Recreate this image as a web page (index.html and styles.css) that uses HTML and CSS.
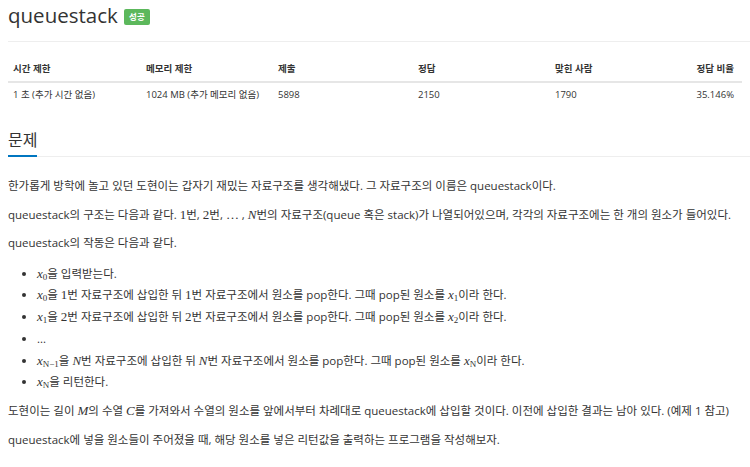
FILE: index.html
```html
<!DOCTYPE html>
<html lang="ko">
<head>
  <meta charset="UTF-8" />
  <meta name="viewport" content="width=device-width, initial-scale=1.0"/>
  <title>queuestack</title>
  <link rel="stylesheet" href="styles.css">
</head>
<body>

<div class="page">
  <!-- Title -->
  <div class="page-header">
    <h1><span class="title">queuestack</span> <span class="label">성공</span></h1>
  </div>

  <!-- Limits table -->
  <table class="info">
    <thead>
      <tr>
        <th class="c1">시간 제한</th>
        <th class="c2">메모리 제한</th>
        <th class="c3">제출</th>
        <th class="c4">정답</th>
        <th class="c5">맞힌 사람</th>
        <th class="c6">정답 비율</th>
      </tr>
    </thead>
    <tbody>
      <tr>
        <td>1 초 (추가 시간 없음)</td>
        <td>1024 MB (추가 메모리 없음)</td>
        <td>5898</td>
        <td>2150</td>
        <td>1790</td>
        <td class="c6">35.146%</td>
      </tr>
    </tbody>
  </table>

  <!-- Problem -->
  <div class="section">
    <div class="headline">
      <h2>문제</h2>
    </div>
    <div class="problem-text">
      <p>한가롭게 방학에 놀고 있던 도현이는 갑자기 재밌는 자료구조를 생각해냈다. 그 자료구조의 이름은 queuestack이다.</p>
      <p>queuestack의 구조는 다음과 같다. <span class="num">1</span>번, <span class="num">2</span>번, <span class="num">…</span> , <span class="math">N</span>번의 자료구조(queue 혹은 stack)가 나열되어있으며, 각각의 자료구조에는 한 개의 원소가 들어있다.</p>
      <p>queuestack의 작동은 다음과 같다.</p>
      <ul>
        <li><span class="math">x<sub>0</sub></span>을 입력받는다.</li>
        <li><span class="math">x<sub>0</sub></span>을 <span class="num">1</span>번 자료구조에 삽입한 뒤 <span class="num">1</span>번 자료구조에서 원소를 pop한다. 그때 pop된 원소를 <span class="math">x<sub>1</sub></span>이라 한다.</li>
        <li><span class="math">x<sub>1</sub></span>을 <span class="num">2</span>번 자료구조에 삽입한 뒤 <span class="num">2</span>번 자료구조에서 원소를 pop한다. 그때 pop된 원소를 <span class="math">x<sub>2</sub></span>이라 한다.</li>
        <li>...</li>
        <li><span class="math">x<sub>N<span class="up">−1</span></sub></span>을 <span class="math">N</span>번 자료구조에 삽입한 뒤 <span class="math">N</span>번 자료구조에서 원소를 pop한다. 그때 pop된 원소를 <span class="math">x<sub>N</sub></span>이라 한다.</li>
        <li><span class="math">x<sub>N</sub></span>을 리턴한다.</li>
      </ul>
      <p>도현이는 길이 <span class="math">M</span>의 수열 <span class="math">C</span>를 가져와서 수열의 원소를 앞에서부터 차례대로 queuestack에 삽입할 것이다. 이전에 삽입한 결과는 남아 있다. (예제 1 참고)</p>
      <p>queuestack에 넣을 원소들이 주어졌을 때, 해당 원소를 넣은 리턴값을 출력하는 프로그램을 작성해보자.</p>
    </div>
  </div>
</div>

</body>
</html>
```

FILE: styles.css
```css
* {
  margin: 0;
  padding: 0;
  box-sizing: border-box;
}

body {
  font-family: "Open Sans", "Noto Sans CJK KR", sans-serif;
  font-size: 11.5px;
  color: #333;
  background: #fff;
}

.page {
  padding-left: 8px;
}

/* title */
.page-header {
  padding-bottom: 11px;
  border-bottom: 1px solid #eee;
}

.page-header h1 {
  font-size: 20.5px;
  font-weight: 400;
  line-height: 30px;
}

.label {
  display: inline-block;
  vertical-align: 3px;
  margin-left: 1px;
  padding: 0 5px;
  height: 16px;
  line-height: 16px;
  font-size: 8.5px;
  font-weight: bold;
  color: #fff;
  background-color: #5cb85c;
  border-radius: 2px;
}

/* limits table */
.info {
  width: 734px;
  margin-top: 11px;
  border-collapse: collapse;
  table-layout: fixed;
  font-size: 9.5px;
}

.info th,
.info td {
  text-align: left;
  line-height: 15px;
  padding: 8px 5px 5px;
  white-space: nowrap;
}

.info th {
  font-weight: bold;
  border-bottom: 2px solid #e6e6e6;
}

.info td {
  padding: 4px 5px 8px;
}

.info .c1 { width: 133px; }
.info .c2 { width: 132px; }
.info .c3 { width: 140px; }
.info .c4 { width: 137px; }
.info .c5 { width: 100px; }

.info .c6 {
  text-align: right;
  padding-right: 8px;
}

/* problem section */
.headline {
  margin-top: 20px;
  border-bottom: 1px solid #eee;
}

.headline h2 {
  display: inline-block;
  font-size: 16px;
  font-weight: 400;
  line-height: 20px;
  padding-bottom: 5px;
  margin-bottom: -1px;
  border-bottom: 2px solid #0076c0;
}

.problem-text {
  margin-top: 20px;
}

.problem-text p {
  line-height: 18px;
  margin-bottom: 10.5px;
}

.problem-text ul {
  padding-left: 29px;
  margin-bottom: 9px;
}

.problem-text li {
  line-height: 21.8px;
}

.math,
.num {
  font-family: "Liberation Serif", "DejaVu Serif", serif;
  font-size: 13px;
}

.math {
  font-style: italic;
}

.math sub {
  font-size: 9px;
  vertical-align: -2px;
  line-height: 0;
  font-style: normal;
}
```
